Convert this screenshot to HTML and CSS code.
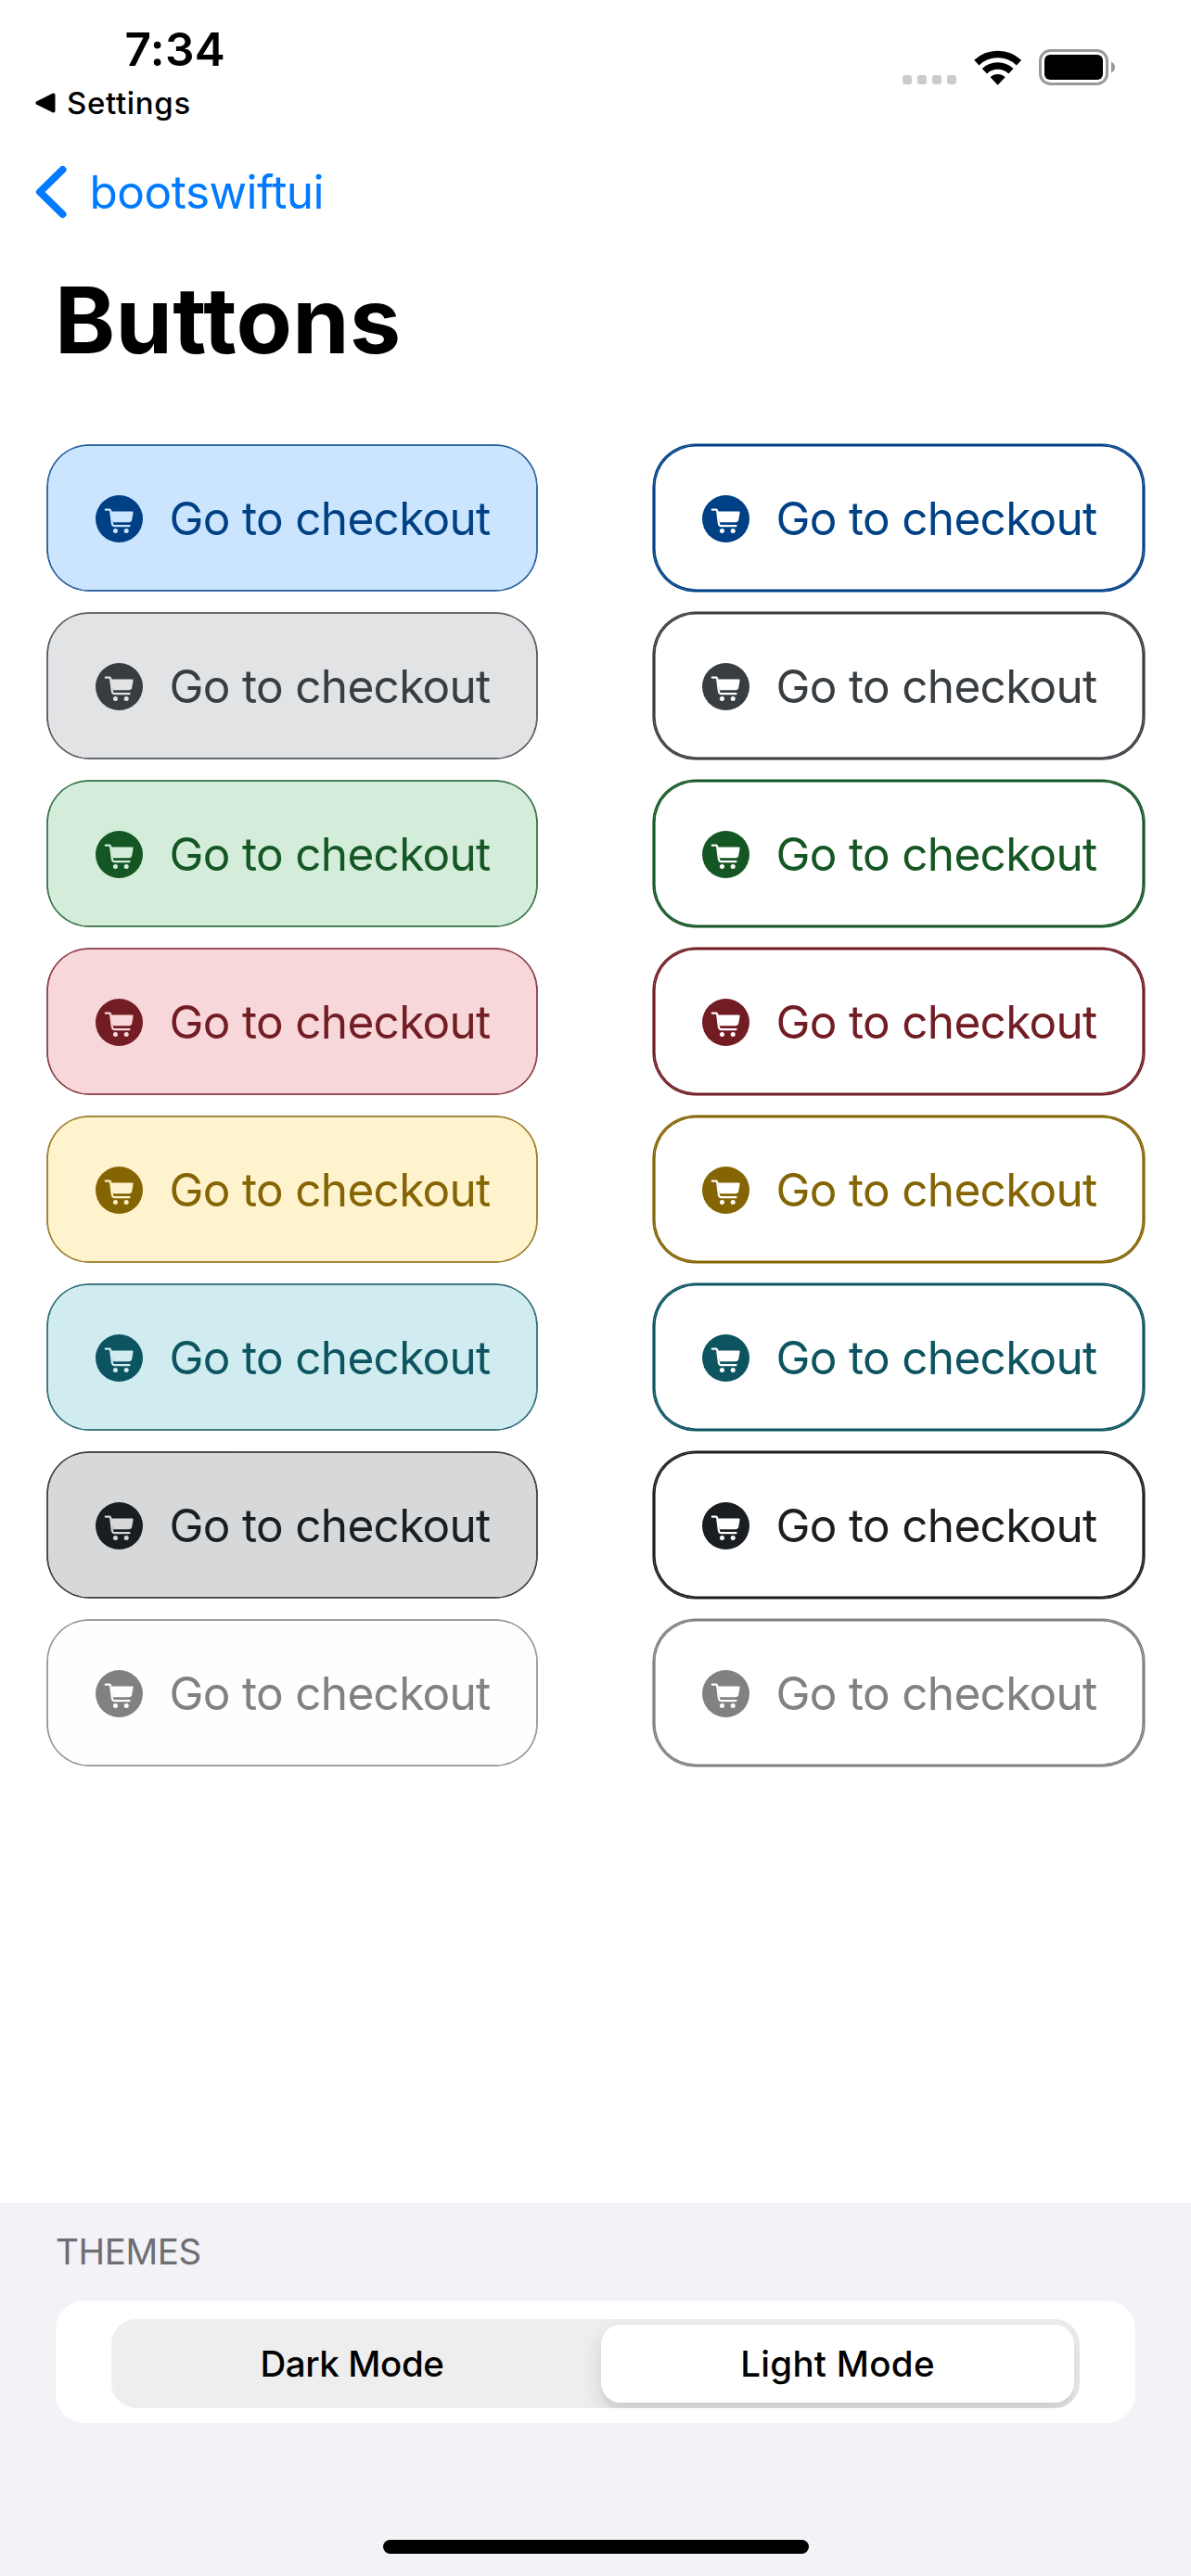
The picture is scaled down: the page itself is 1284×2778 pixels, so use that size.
FILE: index.html
```html
<!DOCTYPE html>
<html lang="en">
<head>
<meta charset="utf-8">
<title>Buttons</title>
<link rel="stylesheet" href="styles.css">
</head>
<body>
<svg class="defs" width="0" height="0" aria-hidden="true">
  <symbol id="cart" viewBox="0 0 152 152">
    <circle cx="76" cy="76" r="76" fill="currentColor"/>
    <g class="cart-shape">
      <path d="M49 52H117Q121.500 52 121 56L117 79Q115.500 87 107 87H56Z"/>
      <path class="cart-rail" d="M32 46.500H45Q47.500 46.500 48 49.500L53.500 92Q54.500 98.500 61 98.500H109"/>
      <circle cx="64" cy="115" r="7.500"/>
      <circle cx="99" cy="115" r="7.500"/>
    </g>
  </symbol>
</svg>

<header class="status">
  <div class="status-left">
    <div class="time">7:34</div>
    <div class="return">
      <svg width="22" height="22" viewBox="0 0 22 22"><path d="M2.500 11L19.500 2.500V19.500Z" stroke="#000" stroke-width="4" stroke-linejoin="round"/></svg>
      <span>Settings</span>
    </div>
  </div>
  <div class="status-right">
    <div class="dots"><i></i><i></i><i></i><i></i></div>
    <svg width="51" height="38" viewBox="0 0 153 114">
      <g fill="none" stroke="#000">
        <path d="M8.500 40.800A99.500 99.500 0 0 1 145.500 40.800" stroke-width="23"/>
        <path d="M34.300 68A62 62 0 0 1 119.700 68" stroke-width="23"/>
      </g>
      <path d="M77 113L53 87.600A35 35 0 0 1 101 87.600Z"/>
    </svg>
    <svg width="82" height="39" viewBox="0 0 82 39">
      <rect x="1.500" y="1.500" width="72" height="36" rx="11" fill="none" stroke="#999" stroke-width="3"/>
      <rect x="6" y="6" width="63" height="27" rx="6"/>
      <path d="M78 13.500Q82 15.500 82 19.500T78 25.500Z" fill="#999"/>
    </svg>
  </div>
</header>

<nav class="nav">
  <svg width="34" height="58" viewBox="0 0 34 58"><path d="M29.500 5L5 29L29.500 53" fill="none" stroke="#007aff" stroke-width="8" stroke-linecap="round" stroke-linejoin="round"/></svg>
  <span>bootswiftui</span>
</nav>
<h1 class="title">Buttons</h1>

<main class="grid">
  <button class="btn primary"><svg class="icon"><use href="#cart"/></svg>Go to checkout</button>
  <button class="btn outline primary"><svg class="icon"><use href="#cart"/></svg>Go to checkout</button>
  <button class="btn secondary"><svg class="icon"><use href="#cart"/></svg>Go to checkout</button>
  <button class="btn outline secondary"><svg class="icon"><use href="#cart"/></svg>Go to checkout</button>
  <button class="btn success"><svg class="icon"><use href="#cart"/></svg>Go to checkout</button>
  <button class="btn outline success"><svg class="icon"><use href="#cart"/></svg>Go to checkout</button>
  <button class="btn danger"><svg class="icon"><use href="#cart"/></svg>Go to checkout</button>
  <button class="btn outline danger"><svg class="icon"><use href="#cart"/></svg>Go to checkout</button>
  <button class="btn warning"><svg class="icon"><use href="#cart"/></svg>Go to checkout</button>
  <button class="btn outline warning"><svg class="icon"><use href="#cart"/></svg>Go to checkout</button>
  <button class="btn info"><svg class="icon"><use href="#cart"/></svg>Go to checkout</button>
  <button class="btn outline info"><svg class="icon"><use href="#cart"/></svg>Go to checkout</button>
  <button class="btn dark"><svg class="icon"><use href="#cart"/></svg>Go to checkout</button>
  <button class="btn outline dark"><svg class="icon"><use href="#cart"/></svg>Go to checkout</button>
  <button class="btn light"><svg class="icon"><use href="#cart"/></svg>Go to checkout</button>
  <button class="btn outline light"><svg class="icon"><use href="#cart"/></svg>Go to checkout</button>
</main>

<footer class="themes">
  <div class="themes-label">THEMES</div>
  <div class="card">
    <div class="segmented">
      <div class="segment">Dark Mode</div>
      <div class="segment selected">Light Mode</div>
    </div>
  </div>
  <div class="home"></div>
</footer>
</body>
</html>
```
FILE: styles.css
```css
* { box-sizing: border-box; }

body {
  margin: 0;
  height: 2778px;
  display: flex;
  flex-direction: column;
  background: #fff;
  color: #000;
  font-family: Inter, "Liberation Sans", sans-serif;
}

.defs { position: absolute; }

/* Status bar */
.status {
  height: 167px;
  display: flex;
  justify-content: space-between;
}
.status-left { padding: 23px 0 0 38px; }
.time {
  margin-left: 96.5px;
  line-height: 60px;
  font-size: 49.5px;
  font-weight: 600;
  letter-spacing: 0.4px;
}
.return {
  margin-top: 8px;
  height: 40px;
  display: flex;
  align-items: center;
  gap: 12px;
  font-size: 33px;
  font-weight: 500;
  letter-spacing: 0.65px;
}
.status-right {
  height: 92px;
  padding: 53px 82px 0 0;
  display: flex;
  align-items: flex-start;
  gap: 19px;
}
.dots {
  height: 38px;
  display: flex;
  align-items: flex-end;
  gap: 6px;
}
.dots i {
  width: 10px;
  height: 10px;
  border-radius: 3px;
  background: #cbcbcb;
}
.status-right svg:nth-of-type(1) { margin-top: 1px; }

/* Navigation */
.nav {
  height: 80px;
  padding-left: 38px;
  display: flex;
  align-items: center;
  gap: 24.5px;
  color: #007aff;
  font-size: 49.5px;
  letter-spacing: -0.5px;
}
.title {
  margin: 38px 0 0;
  padding-left: 59px;
  line-height: 120px;
  font-size: 98.6px;
  font-weight: 700;
  letter-spacing: 0.3px;
}

/* Buttons */
.grid {
  margin-top: 75px;
  padding: 0 51px;
  display: grid;
  grid-template-columns: 528px 528px;
  gap: 24px 126px;
}
.btn {
  height: 157px;
  padding: 1px 0 0 52px;
  display: flex;
  align-items: center;
  gap: 28.6px;
  border: 0;
  border-radius: 45px;
  background: var(--fill);
  color: var(--ink);
  box-shadow: 0 0 0 0.75px var(--ink), inset 0 0 0 0.75px var(--ink);
  font-family: inherit;
  font-size: 49.5px;
  letter-spacing: -0.7px;
  white-space: nowrap;
}
.icon { width: 51px; height: 51px; flex: none; }
.cart-shape { fill: var(--fill); }
.cart-rail { fill: none; stroke: var(--fill); stroke-width: 6.5px; stroke-linecap: round; }

.primary { --ink: #004085; --fill: #cce5ff; }
.secondary { --ink: #383d41; --fill: #e2e3e5; }
.success { --ink: #155724; --fill: #d4edda; }
.danger { --ink: #721c24; --fill: #f8d7da; }
.warning { --ink: #856404; --fill: #fff3cd; }
.info { --ink: #0c5460; --fill: #d1ecf1; }
.dark { --ink: #1b1e21; --fill: #d6d8d9; }
.light { --ink: #818182; --fill: #fefefe; }
.outline {
  --fill: #fff;
  box-shadow: 0 0 0 1.6px var(--ink), inset 0 0 0 1.6px var(--ink);
}

/* Theme picker */
.themes {
  margin-top: auto;
  height: 402px;
  padding: 27px 60px 0;
  background: #f2f2f7;
}
.themes-label {
  line-height: 50px;
  color: #6d6d72;
  font-size: 38.5px;
  letter-spacing: -0.4px;
}
.card {
  margin-top: 28px;
  height: 132px;
  padding: 20px 60px 16px;
  border-radius: 31px;
  background: #fff;
}
.segmented {
  height: 96px;
  padding: 6px;
  display: flex;
  justify-content: space-between;
  overflow: hidden;
  border-radius: 27px;
  background: #eee;
}
.segment {
  width: 507px;
  line-height: 84px;
  text-align: center;
  font-size: 38.5px;
  font-weight: 500;
  letter-spacing: -0.4px;
}
.selected {
  width: 510px;
  border-radius: 21px;
  background: #fff;
  letter-spacing: 0.3px;
  box-shadow: 0 9px 24px rgba(0, 0, 0, 0.12), 0 9px 3px rgba(0, 0, 0, 0.04);
}
.home {
  width: 459px;
  height: 15px;
  margin: 126px auto 0;
  border-radius: 8px;
  background: #000;
}
```
